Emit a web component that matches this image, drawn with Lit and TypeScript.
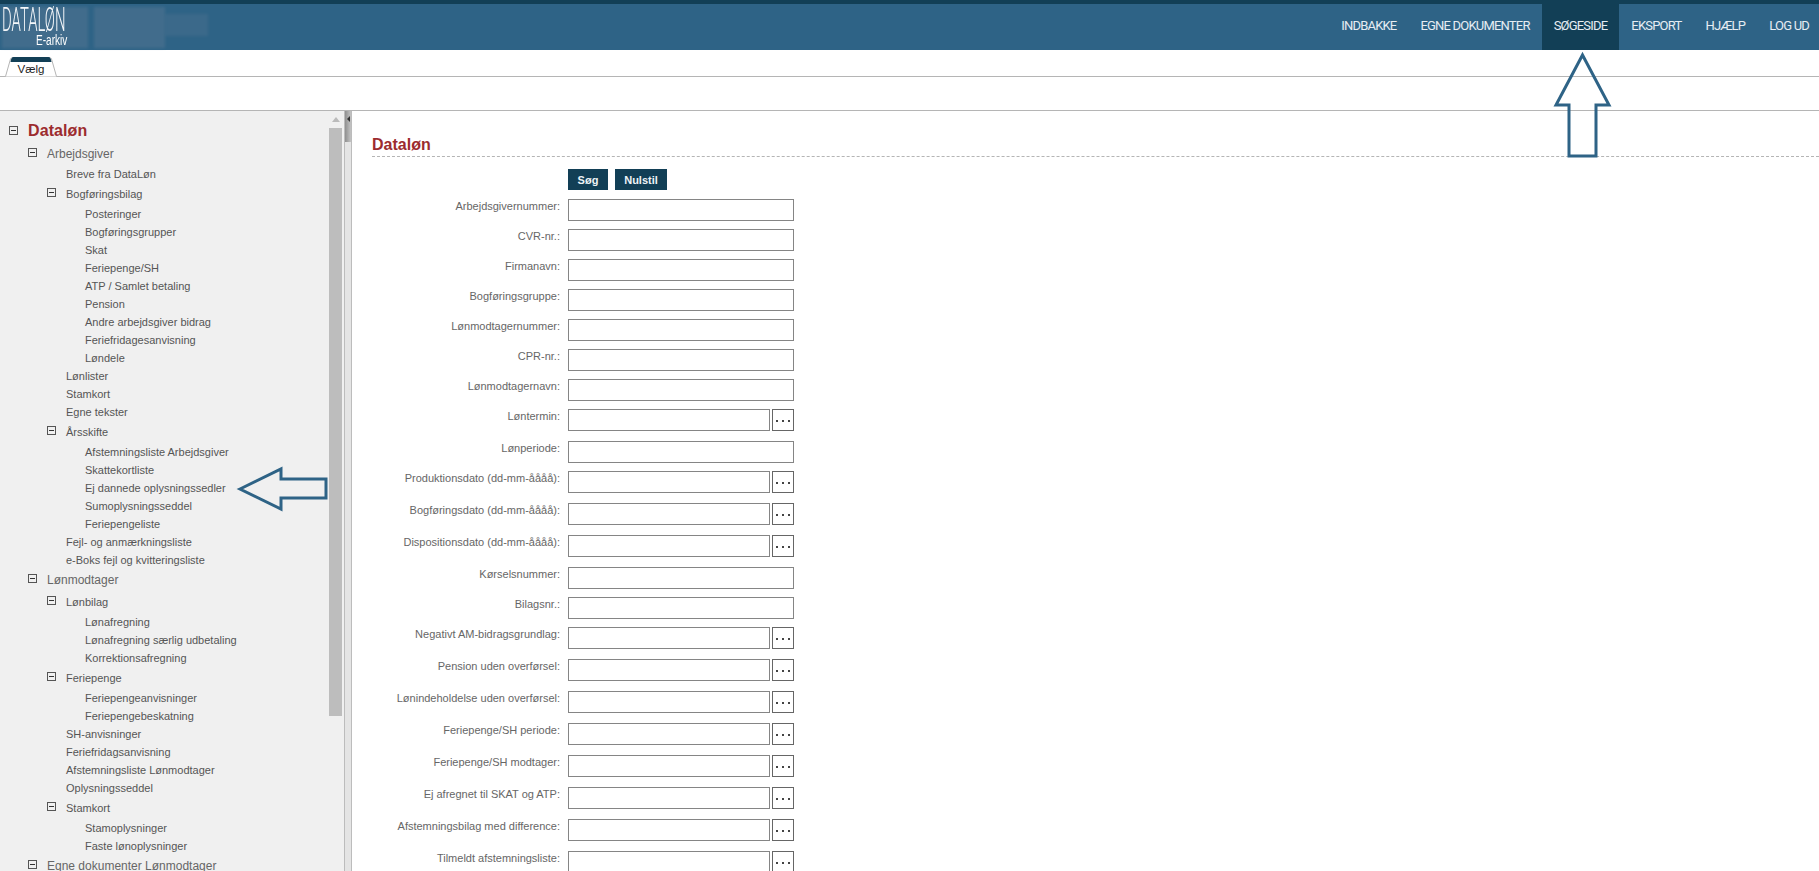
import { LitElement, html, css, svg } from "lit";
import { customElement } from "lit/decorators.js";

type Row = { t: string; k: "root" | "l1" | "group" | "leaf" | "sub" };
const tree: Row[] = [
  { t: "Dataløn", k: "root" },
  { t: "Arbejdsgiver", k: "l1" },
  { t: "Breve fra DataLøn", k: "leaf" },
  { t: "Bogføringsbilag", k: "group" },
  ...["Posteringer", "Bogføringsgrupper", "Skat", "Feriepenge/SH", "ATP / Samlet betaling", "Pension", "Andre arbejdsgiver bidrag", "Feriefridagesanvisning", "Løndele"].map((t) => ({ t, k: "sub" as const })),
  ...["Lønlister", "Stamkort", "Egne tekster"].map((t) => ({ t, k: "leaf" as const })),
  { t: "Årsskifte", k: "group" },
  ...["Afstemningsliste Arbejdsgiver", "Skattekortliste", "Ej dannede oplysningssedler", "Sumoplysningsseddel", "Feriepengeliste"].map((t) => ({ t, k: "sub" as const })),
  ...["Fejl- og anmærkningsliste", "e-Boks fejl og kvitteringsliste"].map((t) => ({ t, k: "leaf" as const })),
  { t: "Lønmodtager", k: "l1" },
  { t: "Lønbilag", k: "group" },
  ...["Lønafregning", "Lønafregning særlig udbetaling", "Korrektionsafregning"].map((t) => ({ t, k: "sub" as const })),
  { t: "Feriepenge", k: "group" },
  ...["Feriepengeanvisninger", "Feriepengebeskatning"].map((t) => ({ t, k: "sub" as const })),
  ...["SH-anvisninger", "Feriefridagsanvisning", "Afstemningsliste Lønmodtager", "Oplysningsseddel"].map((t) => ({ t, k: "leaf" as const })),
  { t: "Stamkort", k: "group" },
  ...["Stamoplysninger", "Faste lønoplysninger"].map((t) => ({ t, k: "sub" as const })),
  { t: "Egne dokumenter Lønmodtager", k: "l1" },
];

const fields: [string, boolean][] = [
  ["Arbejdsgivernummer:", false],
  ["CVR-nr.:", false],
  ["Firmanavn:", false],
  ["Bogføringsgruppe:", false],
  ["Lønmodtagernummer:", false],
  ["CPR-nr.:", false],
  ["Lønmodtagernavn:", false],
  ["Løntermin:", true],
  ["Lønperiode:", false],
  ["Produktionsdato (dd-mm-åååå):", true],
  ["Bogføringsdato (dd-mm-åååå):", true],
  ["Dispositionsdato (dd-mm-åååå):", true],
  ["Kørselsnummer:", false],
  ["Bilagsnr.:", false],
  ["Negativt AM-bidragsgrundlag:", true],
  ["Pension uden overførsel:", true],
  ["Lønindeholdelse uden overførsel:", true],
  ["Feriepenge/SH periode:", true],
  ["Feriepenge/SH modtager:", true],
  ["Ej afregnet til SKAT og ATP:", true],
  ["Afstemningsbilag med difference:", true],
  ["Tilmeldt afstemningsliste:", true],
];

const nav = ["INDBAKKE", "EGNE DOKUMENTER", "SØGESIDE", "EKSPORT", "HJÆLP", "LOG UD"];

@customElement("app-root")
export class AppRoot extends LitElement {
  static styles = css`
    :host { display: block; position: relative; width: 100%; height: 100vh; overflow: hidden; background: #fff; font-family: "Liberation Sans", Arial, sans-serif; color: #555; }
    .page { display: flex; flex-direction: column; height: 100%; }
    .top { flex: none; height: 46px; border-top: 4px solid #123f56; background: #2e6386; display: flex; justify-content: space-between; color: #fff; }
    .logo { position: relative; width: 240px; height: 46px; }
    .blur { position: absolute; background: #4f7390; opacity: .6; filter: blur(1.5px); }
    .b1 { left: 2px; top: 3px; width: 86px; height: 41px; }
    .b2 { left: 94px; top: 3px; width: 71px; height: 41px; }
    .b3 { left: 165px; top: 10px; width: 43px; height: 22px; opacity: .4; }
    .lg1 { position: absolute; left: 2px; top: 4px; font-family: Roboto, sans-serif; font-weight: 300; font-size: 33px; line-height: 24px; transform-origin: 0 0; transform: scaleX(.45); white-space: nowrap; color: #f4f7fa; }
    .lg2 { position: absolute; left: 36px; top: 30px; font-size: 14px; line-height: 12px; transform-origin: 0 0; transform: scaleX(.72); white-space: nowrap; }
    nav { display: flex; }
    nav a { display: flex; align-items: center; padding: 0 12px 3px; font-family: Roboto, sans-serif; font-size: 13px; letter-spacing: -0.8px; color: #e6edf3; }
    nav a:last-child { padding-right: 10px; }
    nav a.on { background: #123f56; }
    .tabs { flex: none; height: 26px; border-bottom: 1px solid #b5b5b5; padding-left: 5px; display: flex; align-items: flex-end; }
    .tab { position: relative; width: 52px; height: 20px; margin-bottom: -1px; display: flex; align-items: center; justify-content: center; font-size: 11.5px; color: #222; padding-top: 3px; box-sizing: border-box; }
    .tab svg { position: absolute; left: 0; top: 0; }
    .tab span { position: relative; }
    .bar { flex: none; height: 33px; border-bottom: 1px solid #b5b5b5; }
    .main { flex: 1; min-height: 0; display: flex; }
    .side { flex: none; width: 344px; display: flex; background: #f0f0f0; overflow: hidden; }
    .tree { flex: 1; padding-top: 9px; min-width: 0; }
    .row { display: flex; align-items: center; white-space: nowrap; font-size: 11px; height: 18px; color: #555; box-sizing: border-box; }
    .row i { flex: none; box-sizing: border-box; width: 9px; height: 9px; border: 1px solid #555; margin-right: 10px; position: relative; margin-top: -4px; }
    .row i::after { content: ""; position: absolute; left: 1px; right: 1px; top: 3px; height: 1px; background: #333; }
    .root { height: 22px; padding-left: 9px; font-size: 16px; font-weight: bold; letter-spacing: .1px; color: #9c2b2e; }
    .root i { margin-top: -1px; }
    .l1 { height: 22px; padding-left: 28px; padding-top: 2px; font-size: 12px; color: #666; }
    .group { height: 22px; padding-left: 47px; padding-top: 2px; }
    .leaf { padding-left: 66px; padding-top: 2px; }
    .sub { padding-left: 85px; padding-top: 2px; }
    .sb { flex: none; width: 13px; margin-right: 2px; display: flex; flex-direction: column; align-items: stretch; }
    .sb .up { height: 17px; display: flex; justify-content: center; align-items: center; }
    .sb .up b { width: 0; height: 0; border: 4px solid transparent; border-top: 0; border-bottom: 5px solid #bbb; }
    .sb .th { height: 588px; background: #bdbdbd; }
    .split { flex: none; width: 8px; box-sizing: border-box; background: #e4e4e4; border-left: 1px solid #bcbcbc; border-right: 1px solid #bcbcbc; position: relative; }
    .split .h { height: 31px; background: linear-gradient(90deg, #8f8f8f, #c4c4c4); display: flex; align-items: center; justify-content: center; padding-bottom: 16px; box-sizing: border-box; }
    .split .h b { width: 0; height: 0; border: 3px solid transparent; border-left: 0; border-right: 3px solid #333; }
    .content { flex: 1; min-width: 0; padding: 24px 0 0 20px; overflow: hidden; }
    h1 { margin: 0; font-size: 16px; line-height: 20px; height: 21px; color: #9c2b2e; font-weight: bold; border-bottom: 1px dashed #b5b5b5; }
    .form { display: grid; grid-template-columns: 188px auto; justify-content: start; column-gap: 8px; margin-top: 12px; }
    .btns { grid-column: 2; display: flex; gap: 7px; height: 21px; margin-bottom: 9px; }
    .btn { background: #123f56; color: #eef3f7; font-size: 11px; font-weight: bold; display: flex; align-items: center; justify-content: center; height: 21px; }
    .s { width: 40px; } .n { width: 52px; }
    label { font-size: 11px; color: #666; text-align: right; white-space: nowrap; line-height: 14px; }
    .ctl { display: flex; gap: 2px; height: 22px; margin-bottom: 8px; }
    .ctl.d { margin-bottom: 10px; }
    .inp { box-sizing: border-box; width: 226px; height: 22px; border: 1px solid #858585; background: #fff; }
    .ctl.d .inp { width: 202px; }
    .dots { box-sizing: border-box; width: 22px; height: 22px; border: 1px solid #666; background: #fff; display: flex; align-items: center; justify-content: center; gap: 4px; padding-top: 2px; }
    .dots u { width: 2px; height: 2px; background: #444; }
    .arrow { position: absolute; pointer-events: none; left: 0; top: 0; }
  `;

  render() {
    return html`<div class="page">
        <header class="top">
          <div class="logo">
            <div class="blur b1"></div><div class="blur b2"></div><div class="blur b3"></div>
            <span class="lg1">DATALØN</span><span class="lg2">E-arkiv</span>
          </div>
          <nav>${nav.map((n) => html`<a class=${n === "SØGESIDE" ? "on" : ""}>${n}</a>`)}</nav>
        </header>
        <div class="tabs">
          <div class="tab">
            <svg width="52" height="20" viewBox="0 0 52 20">
              <path d="M0.5 19.5 L5.5 2 Q6 0.5 8 0.5 L44 0.5 Q46 0.5 46.5 2 L51.5 19.5" fill="#fff" stroke="#b5b5b5"/>
              <path d="M5.5 5 L6.2 2 Q6.8 0 8.5 0 L43.5 0 Q45.2 0 45.8 2 L46.5 5 Z" fill="#123f56"/>
            </svg>
            <span>Vælg</span>
          </div>
        </div>
        <div class="bar"></div>
        <div class="main">
          <aside class="side">
            <div class="tree">
              ${tree.map((r) => html`<div class="row ${r.k}">${r.k === "leaf" || r.k === "sub" ? "" : html`<i></i>`}${r.t}</div>`)}
            </div>
            <div class="sb"><div class="up"><b></b></div><div class="th"></div></div>
          </aside>
          <div class="split"><div class="h"><b></b></div></div>
          <section class="content">
            <h1>Dataløn</h1>
            <div class="form">
              <div class="btns"><div class="btn s">Søg</div><div class="btn n">Nulstil</div></div>
              ${fields.map(([l, d]) => html`<label>${l}</label>
                  <div class="ctl ${d ? "d" : ""}"><div class="inp"></div>${d ? html`<div class="dots"><u></u><u></u><u></u></div>` : ""}</div>`)}
            </div>
          </section>
        </div>
      </div>
      <svg class="arrow" width="1819" height="871" viewBox="0 0 1819 871" fill="none" stroke="#2e6386" stroke-width="3">
        ${svg`<path d="M1582.5 55 L1609 105 L1596 105 L1596 156 L1569 156 L1569 105 L1556 105 Z"/>
        <path d="M240 489 L281 469 L281 479 L326 479 L326 498 L281 498 L281 509 Z"/>`}
      </svg>`;
  }
}
